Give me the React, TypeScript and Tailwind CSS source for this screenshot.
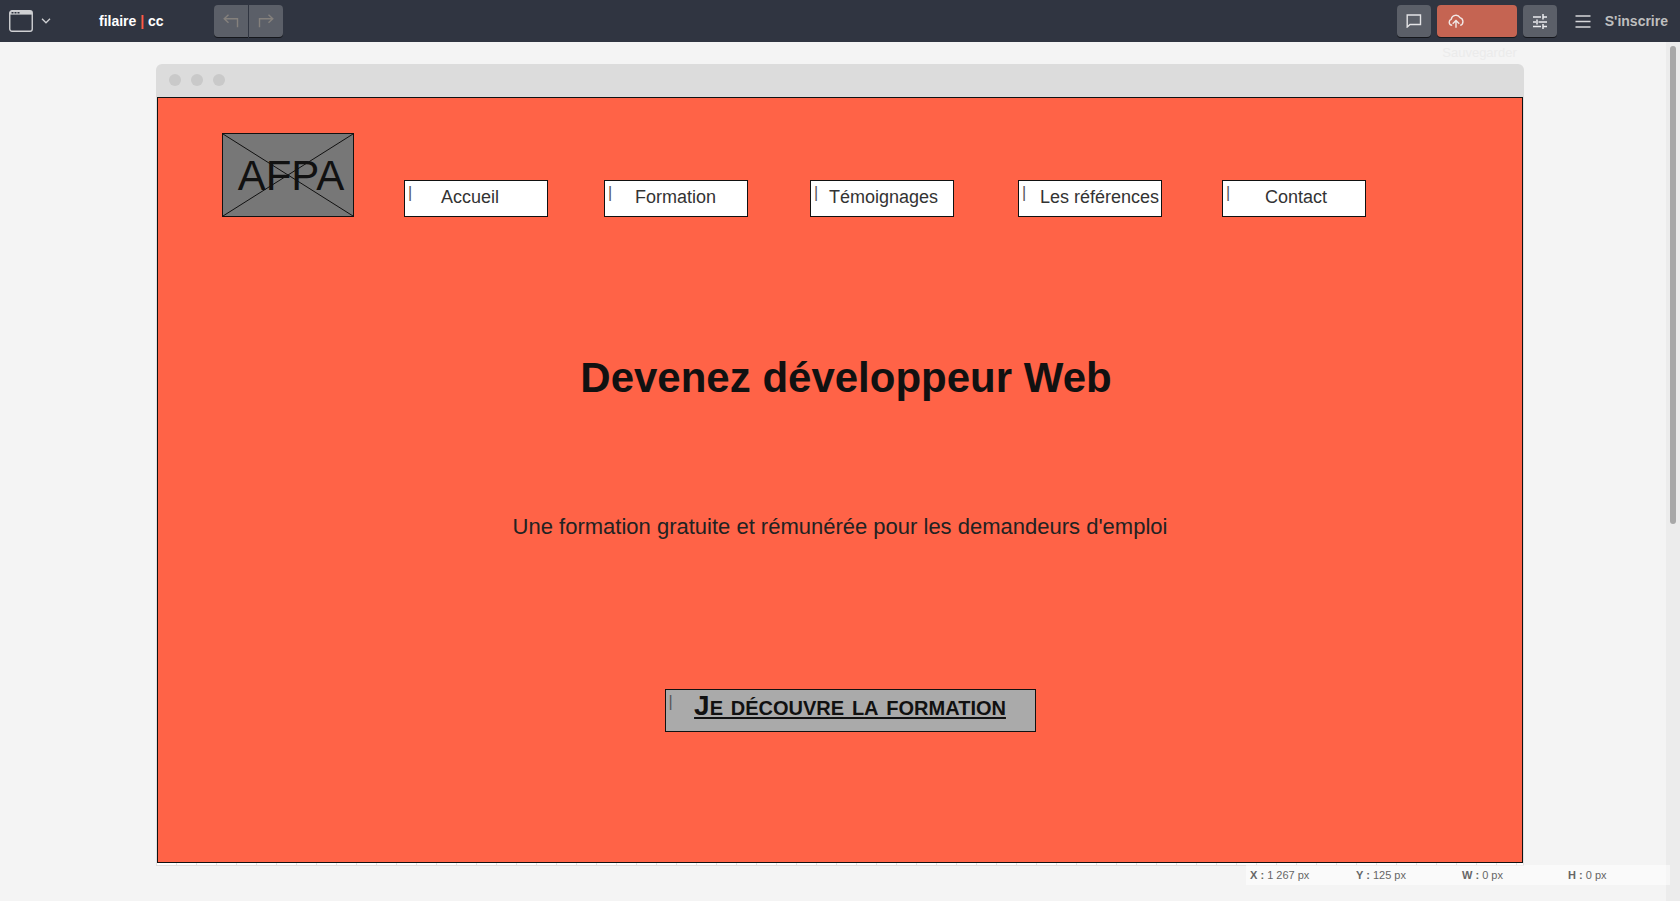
import type { ReactNode } from "react";

function Cursor() {
  return (
    <span aria-hidden="true" className="absolute left-[3px] top-[3px] text-base font-normal leading-[18px] text-[#555]">
      |
    </span>
  );
}

type NavItem = { label: string; box: string };

const navItems: NavItem[] = [
  { label: "Accueil", box: "ml-[50px] pl-9" },
  { label: "Formation", box: "ml-14 pl-[30px]" },
  { label: "Témoignages", box: "ml-[62px] pl-[18px]" },
  { label: "Les références", box: "ml-16 pl-[21px]" },
  { label: "Contact", box: "ml-[60px] pl-[42px]" },
];

const coordinates = [
  { axis: "X", value: "1 267 px" },
  { axis: "Y", value: "125 px" },
  { axis: "W", value: "0 px" },
  { axis: "H", value: "0 px" },
];

function ToolButton({ label, className, children }: { label: string; className: string; children: ReactNode }) {
  return (
    <button
      type="button"
      aria-label={label}
      className={`flex h-8 w-[34px] items-center justify-center bg-[#5b5f68] shadow-[0_1px_0_#15171c] ${className}`}
    >
      {children}
    </button>
  );
}

function Header() {
  return (
    <header className="flex h-[42px] shrink-0 items-center bg-[#303541] text-sm font-bold">
      <button type="button" aria-label="Type de page" className="ml-[9px] flex items-center gap-2">
        <svg width="24" height="22" viewBox="0 0 24 22" fill="none">
          <rect x="0.75" y="0.75" width="22.5" height="20.5" rx="2.2" stroke="#cfd0d3" strokeWidth="1.4" />
          <path d="M1 1h22v3.6H1z" fill="#cfd0d3" />
          <path d="M2.5 2.7h2M5.5 2.7h2M8.5 2.7h2" stroke="#303541" strokeWidth="1.4" />
        </svg>
        <svg width="10" height="6" viewBox="0 0 10 6" fill="none" stroke="#cfd0d3" strokeWidth="1.3">
          <path d="M1 .8 5 4.8 9 .8" />
        </svg>
      </button>
      <a href="#" className="ml-12 whitespace-nowrap text-white">
        filaire <span className="text-[#ff5a45]">|</span> cc
      </a>
      <div className="ml-[50px] flex gap-px">
        <ToolButton label="Annuler" className="rounded-l">
          <svg width="16" height="14" viewBox="0 0 16 14" fill="none" stroke="#85817d" strokeWidth="1.4">
            <path d="M5.5.8 1.2 4.7l4.3 4M1.2 4.7h13.3v8.6" />
          </svg>
        </ToolButton>
        <ToolButton label="Rétablir" className="rounded-r">
          <svg width="16" height="14" viewBox="0 0 16 14" fill="none" stroke="#85817d" strokeWidth="1.4">
            <path d="m10.5.8 4.3 3.9-4.3 4M14.8 4.7H1.5v8.6" />
          </svg>
        </ToolButton>
      </div>
      <div className="ml-auto flex items-center gap-1.5 pr-3">
        <ToolButton label="Commentaires" className="rounded">
          <svg width="16" height="14" viewBox="0 0 16 14" fill="none" stroke="#e4e4e6" strokeWidth="1.4">
            <path d="M1.2 13V1h13.3v9.5H4z" />
          </svg>
        </ToolButton>
        <button
          type="button"
          className="relative flex h-8 w-20 items-center rounded bg-[#c56452] pl-[11px] shadow-[0_1px_0_#15171c]"
        >
          <svg width="16" height="14" viewBox="0 0 16 14" fill="none" stroke="#f1e8e6" strokeWidth="1.4">
            <path d="M4.2 11.2A3.1 3.1 0 0 1 1.2 8.2 3 3 0 0 1 3.2 5.3 4.8 4.8 0 0 1 12 3.6 4.1 4.1 0 0 1 12.2 11.4" />
            <path d="M8 13.7V6.8M4.7 9.8 8 6.6l3.3 3.2" />
          </svg>
          <span className="absolute right-0 top-10 text-[13px] font-normal leading-4 text-[#ebebeb]">Sauvegarder</span>
        </button>
        <ToolButton label="Réglages" className="rounded">
          <svg width="14" height="15" viewBox="0 0 14 15" fill="none" stroke="#ececee" strokeWidth="1.5">
            <path d="M0 3h8M10 3h4M10 0v5.5M0 8h3M5.5 8H14M4 5.5v5M0 12.5h8M10 12.5h4M10 10v5" />
          </svg>
        </ToolButton>
        <button type="button" aria-label="Menu" className="ml-3">
          <svg width="16" height="13" viewBox="0 0 16 13" stroke="#d5d6d9" strokeWidth="1.4">
            <path d="M.5 1h15M.5 6.5h15M.5 12h15" />
          </svg>
        </button>
        <a href="#" className="ml-2 text-[#bfbfbf]">
          S'inscrire
        </a>
      </div>
    </header>
  );
}

function Mockup() {
  return (
    <div className="flex min-h-0 flex-1 flex-col border border-[#111] bg-[#ff6347] pt-[35px] text-[#111]">
      <div className="flex items-end pl-16">
        <div className="relative flex h-[84px] w-[132px] items-center justify-center border border-[#111] bg-[#777] pt-0.5">
          <svg className="absolute inset-0 size-full" viewBox="0 0 130 82" preserveAspectRatio="none" stroke="#111">
            <path d="M0 0 130 82M130 0 0 82" />
          </svg>
          <span className="relative ml-1.5 text-[42px] leading-[48px]">AFPA</span>
        </div>
        <nav className="flex">
          {navItems.map((item) => (
            <a
              key={item.label}
              href="#"
              className={`relative flex h-[37px] w-36 items-center whitespace-nowrap border border-[#111] bg-white pb-1 text-lg leading-5 text-[#333] ${item.box}`}
            >
              <Cursor />
              {item.label}
            </a>
          ))}
        </nav>
      </div>
      <h1 className="mt-[137px] pl-3 text-center text-[42px] font-bold leading-[48px]">Devenez développeur Web</h1>
      <p className="mt-[113px] text-center text-[22px] leading-6 text-[#222]">
        Une formation gratuite et rémunérée pour les demandeurs d'emploi
      </p>
      <div className="mt-[150px] flex justify-center pl-5">
        <a
          href="#"
          className="relative flex h-[43px] w-[371px] justify-center border border-[#111] bg-[#aaa] text-[28px] font-bold leading-8"
        >
          <Cursor />
          <span className="underline [font-variant-caps:small-caps]">Je découvre la formation</span>
        </a>
      </div>
    </div>
  );
}

export default function App() {
  return (
    <div className="relative flex h-screen flex-col overflow-hidden bg-[#f4f4f4] font-['Liberation_Sans',Arial,sans-serif]">
      <Header />
      <div className="flex min-h-0 flex-1">
        <main className="flex min-w-0 flex-1 flex-col pb-[35px] pl-[156px] pr-[142px] pt-[22px]">
          <div className="flex h-[33px] shrink-0 items-center gap-2.5 rounded-t-md bg-[#dcdcdc] pb-0.5 pl-[13px]">
            <span className="size-3 rounded-full bg-[#c9c9c9]" />
            <span className="size-3 rounded-full bg-[#c9c9c9]" />
            <span className="size-3 rounded-full bg-[#c9c9c9]" />
          </div>
          <div className="flex min-h-0 flex-1 flex-col border border-t-0 border-[#e0e0e0] bg-white bg-[repeating-linear-gradient(90deg,transparent_0_19px,#e4e4e4_19px_20px)] pb-0.5">
            <Mockup />
          </div>
        </main>
        <div className="w-[14px] shrink-0 bg-[#ececec] pl-1 pt-1">
          <div className="h-[478px] w-1.5 rounded-full bg-[#a8a8a8]" />
        </div>
      </div>
      <footer className="absolute bottom-4 right-2.5 grid h-5 w-[424px] grid-cols-4 items-center bg-white/50 text-[11px] text-[#666]">
        {coordinates.map(({ axis, value }) => (
          <span key={axis} className="pl-1">
            <b>{axis} :</b> {value}
          </span>
        ))}
      </footer>
    </div>
  );
}
